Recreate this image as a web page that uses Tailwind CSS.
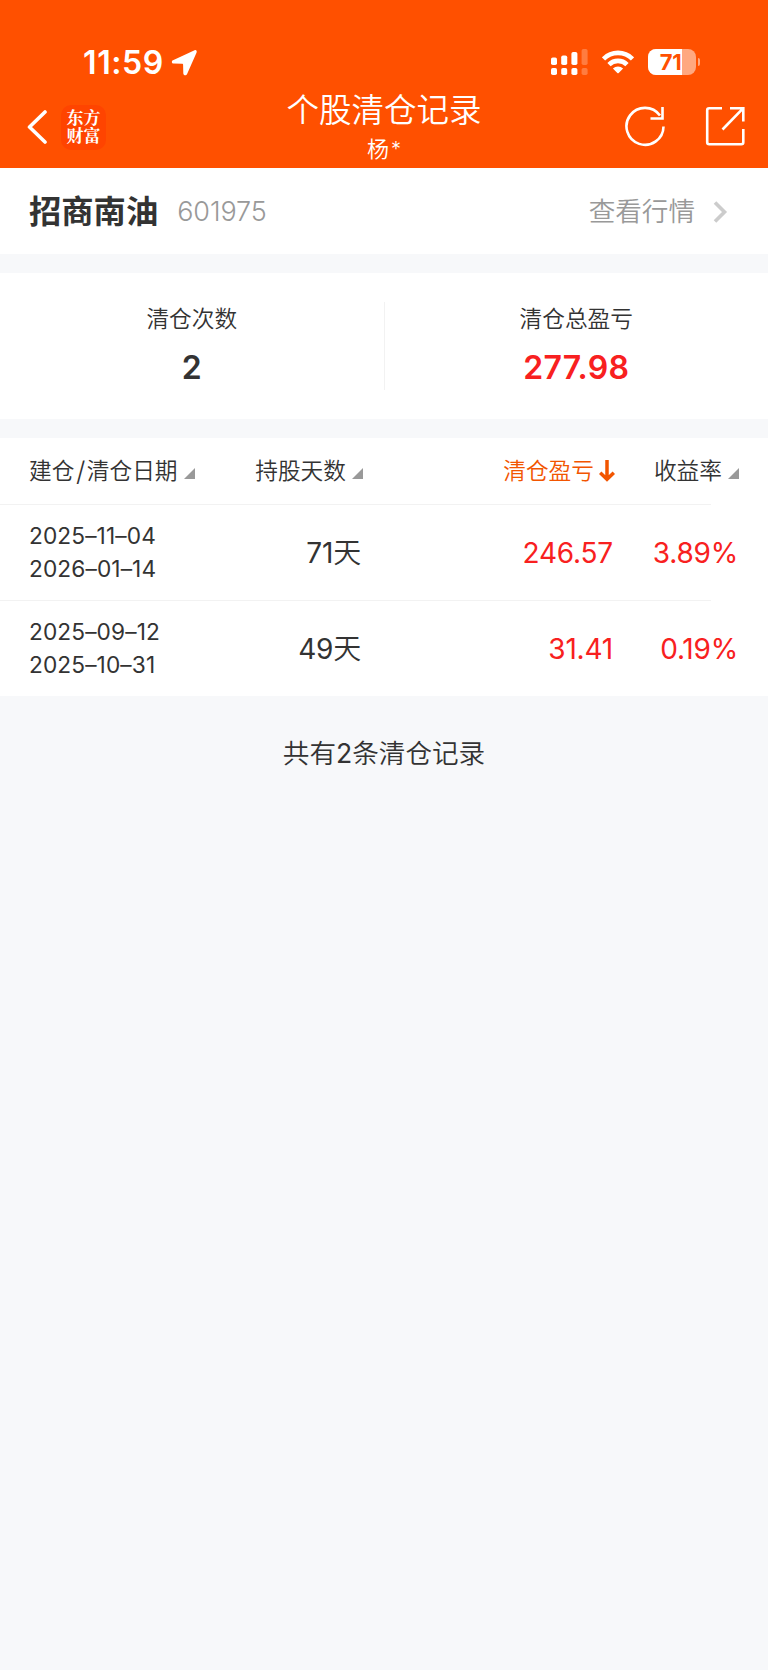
<!DOCTYPE html>
<html lang="zh-CN">
<head>
    <meta charset="UTF-8">
    <meta name="viewport" content="width=device-width, initial-scale=1.0">
    <title>个股清仓记录</title>
    <script src="https://cdn.jsdelivr.net/npm/@tailwindcss/browser@4"></script>
</head>
<body class="min-h-screen bg-[#f7f8fa] font-['Inter','Noto_Sans_CJK_SC',sans-serif] text-[#333333]">
    <header class="flex h-[168px] flex-col bg-[#ff5000] text-white">
        <!-- Status bar -->
        <div class="mt-[43px] flex h-[39px] items-center pl-[83px] pr-[68px]">
            <span class="text-[32px] leading-none font-semibold tracking-[0.6px]">11:59</span>
            <svg class="ml-[7px] h-[27px] w-[27px]" viewBox="0 0 27 27" fill="currentColor">
                <path d="M23.6 1.2 2 11.2C.2 12 .6 14.5 2.6 14.6L11 14.8C11.8 14.8 12.1 15 12.1 15.8L12.3 24.2C12.4 26.6 15.2 27 16.1 25L25.6 3.4C26.2 1.8 25 .6 23.6 1.200Z"/>
            </svg>
            <div class="mb-[1px] ml-auto flex items-center gap-[14px]">
                <svg class="h-[26px] w-[37px]" viewBox="0 0 37 26" fill="currentColor">
                    <rect x="0" y="8.5" width="6" height="7.5" rx="1.8"/>
                    <rect x="10.2" y="6.5" width="6" height="9.5" rx="1.8"/>
                    <rect x="20.4" y="3" width="6" height="13" rx="1.8"/>
                    <rect x="30.6" y="0" width="6" height="16" rx="1.8" opacity=".25"/>
                    <rect x="0" y="19" width="6" height="7" rx="1.8"/>
                    <rect x="10.2" y="19" width="6" height="7" rx="1.8"/>
                    <rect x="20.4" y="19" width="6" height="7" rx="1.8"/>
                    <rect x="30.6" y="19" width="6" height="7" rx="1.8" opacity=".25"/>
                </svg>
                <svg class="h-[24px] w-[32px]" viewBox="0 0 32 24" fill="none" stroke="currentColor" stroke-width="4.6">
                    <path d="M1.5 8.9A20.5 20.5 0 0 1 30.5 8.9"/>
                    <path d="M7 14.6A12.7 12.7 0 0 1 25 14.6"/>
                    <path d="M10.9 18.6A7.3 7.3 0 0 1 21.1 18.6L16.7 23Q16 23.7 15.3 23Z" fill="currentColor" stroke="none"/>
                </svg>
                <div class="flex items-center gap-[2px]">
                    <div class="flex h-[26px] w-[48px] items-center overflow-hidden rounded-[8px] bg-white/50">
                        <div class="flex h-full w-[34px] items-center justify-end bg-white text-[22px] font-bold tracking-[-0.3px] text-[#ff5000]">71</div>
                    </div>
                    <div class="h-[8px] w-[2.5px] rounded-r-full bg-white/50"></div>
                </div>
            </div>
        </div>
        <!-- Navigation bar -->
        <div class="grid h-[86px] grid-cols-[1fr_auto_1fr] items-center">
            <div class="flex items-center pt-[4px] pl-[27px]">
                <svg class="h-[34px] w-[20px]" viewBox="0 0 20 34" fill="none" stroke="currentColor" stroke-width="3.6" stroke-linecap="round" stroke-linejoin="round">
                    <path d="M18 2 2.5 17 18 32"/>
                </svg>
                <div class="ml-[14px] flex h-[45px] w-[45px] flex-col items-center justify-center rounded-[10px] bg-[#ff4400] font-['Inter','Noto_Serif_CJK_SC','Noto_Sans_CJK_SC',serif] text-[17px] leading-[18.5px] font-bold">
                    <span>东方</span>
                    <span>财富</span>
                </div>
            </div>
            <div class="flex flex-col items-center pt-[6px]">
                <h1 class="text-[32.5px] leading-[42px] font-[350]">个股清仓记录</h1>
                <p class="flex text-[22px] leading-[34px] font-[350]">杨<span class="ml-[2px] text-[20px]">*</span></p>
            </div>
            <div class="flex items-center justify-end gap-[39px] pt-[2px] pr-[23.5px]">
                <svg class="h-[42px] w-[42px]" viewBox="0 0 42 42" fill="none" stroke="currentColor" stroke-width="2.6">
                    <path d="M39.5 21.5A18.5 18.5 0 1 1 36 10.500"/>
                    <path d="M38.5 2V13.5H26.5"/>
                </svg>
                <svg class="h-[40px] w-[40px]" viewBox="0 0 40 40" fill="none" stroke="currentColor" stroke-width="2.6">
                    <path d="M17 2.2H4.2Q2.2 2.2 2.2 4.2V36.3Q2.2 38.3 4.2 38.3H36.3Q38.3 38.3 38.3 36.3V23"/>
                    <path d="M25 2.2H38.3V15.5M38.3 2.2 17.5 23.5"/>
                </svg>
            </div>
        </div>
    </header>

    <!-- Stock -->
    <section class="flex h-[86px] items-center bg-white pt-[1px] pr-[40px] pl-[29px]">
        <h2 class="pt-[1px] text-[32.3px] leading-none font-bold">招商南油</h2>
        <span class="ml-[19px] text-[27px] leading-none font-light tracking-[-0.1px] text-[#999999]">601975</span>
        <a class="ml-auto flex items-center gap-[18px] text-[26.6px] leading-none font-[350] text-[#999999]">
            查看行情
            <svg class="h-[22px] w-[15px]" viewBox="0 0 15 22" fill="none" stroke="#cccccc" stroke-width="3.6">
                <path d="M2 1.5 11.5 11 2 20.5"/>
            </svg>
        </a>
    </section>

    <!-- Summary -->
    <section class="mt-[19px] flex h-[146px] items-center bg-white">
        <div class="flex h-[88px] flex-1 flex-col items-center border-r border-[#f2f2f2] pt-[1px]">
            <span class="text-[22.7px] leading-[32px] font-[350]">清仓次数</span>
            <span class="mt-[17px] text-[32px] leading-[32px] font-semibold">2</span>
        </div>
        <div class="flex h-[88px] flex-1 flex-col items-center pt-[1px]">
            <span class="text-[22.7px] leading-[32px] font-[350]">清仓总盈亏</span>
            <span class="mt-[17px] text-[32px] leading-[32px] font-semibold tracking-[0.3px] text-[#f82020]">277.98</span>
        </div>
    </section>

    <!-- Records -->
    <section class="mt-[19px] bg-white">
        <div class="grid h-[66px] grid-cols-[200px_134px_252px_124px] items-center pl-[29px] text-[22.7px] leading-none font-[350]">
            <div class="flex items-center gap-[6px]">
                <span class="flex items-center">建仓<span class="mx-[1.5px] text-[27px] leading-none">/</span>清仓日期</span>
                <svg class="mt-[5px] h-[11px] w-[11px]" viewBox="0 0 11 11" fill="#999999"><path d="M11 0V11H0Z"/></svg>
            </div>
            <div class="flex items-center justify-end gap-[6px]">
                <span>持股天数</span>
                <svg class="mt-[5px] h-[11px] w-[11px]" viewBox="0 0 11 11" fill="#999999"><path d="M11 0V11H0Z"/></svg>
            </div>
            <div class="flex items-center justify-end gap-[5px] text-[#f25500]">
                <span>清仓盈亏</span>
                <svg class="h-[22px] w-[16px]" viewBox="0 0 16 22" fill="none" stroke="currentColor" stroke-width="3.5">
                    <path d="M8 0V19M1.2 12.8 8 19.3 14.8 12.8"/>
                </svg>
            </div>
            <div class="flex items-center justify-end gap-[6px]">
                <span>收益率</span>
                <svg class="mt-[5px] h-[11px] w-[11px]" viewBox="0 0 11 11" fill="#999999"><path d="M11 0V11H0Z"/></svg>
            </div>
        </div>
        <div class="h-px w-[711px] bg-[#f2f2f2]"></div>
        <div class="grid h-[95px] grid-cols-[200px_132px_252px_125px] items-center pl-[29px]">
            <div class="pb-[2px] text-[22.7px] leading-[33px] tracking-[0.1px]">2025–11–04<br>2026–01–14</div>
            <div class="text-right text-[28px] leading-none tracking-[-0.2px]">71<span class="font-[350]">天</span></div>
            <div class="text-right text-[28px] leading-none tracking-[-0.2px] text-[#f82020]">246.57</div>
            <div class="text-right text-[28px] leading-none tracking-[-0.2px] text-[#f82020]">3.89%</div>
        </div>
        <div class="h-px w-[711px] bg-[#f2f2f2]"></div>
        <div class="grid h-[95px] grid-cols-[200px_132px_252px_125px] items-center pl-[29px]">
            <div class="pb-[2px] text-[22.7px] leading-[33px] tracking-[0.1px]">2025–09–12<br>2025–10–31</div>
            <div class="text-right text-[28px] leading-none tracking-[-0.2px]">49<span class="font-[350]">天</span></div>
            <div class="text-right text-[28px] leading-none tracking-[-0.2px] text-[#f82020]">31.41</div>
            <div class="text-right text-[28px] leading-none tracking-[-0.2px] text-[#f82020]">0.19%</div>
        </div>
    </section>

    <p class="mt-[37px] text-center text-[26.6px] leading-[40px] font-[350]">共有<span class="font-normal">2</span>条清仓记录</p>
</body>
</html>
